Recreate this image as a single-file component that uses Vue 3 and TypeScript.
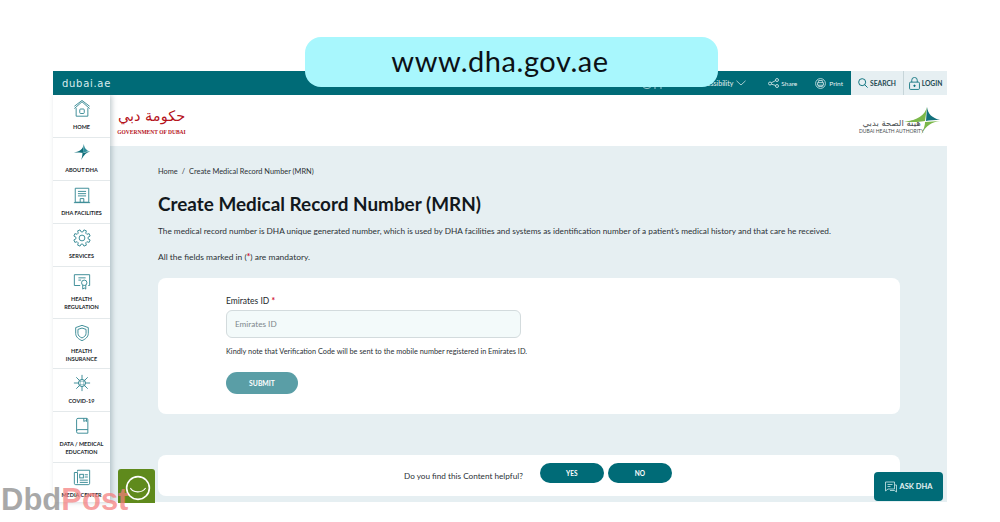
<script setup lang="ts">
const navItems = [
  { id: "home", lines: ["HOME"] },
  { id: "about", lines: ["ABOUT DHA"] },
  { id: "facilities", lines: ["DHA FACILITIES"] },
  { id: "services", lines: ["SERVICES"] },
  { id: "regulation", lines: ["HEALTH", "REGULATION"] },
  { id: "insurance", lines: ["HEALTH", "INSURANCE"] },
  { id: "covid", lines: ["COVID-19"] },
  { id: "education", lines: ["DATA / MEDICAL", "EDUCATION"] },
  { id: "media", lines: ["MEDIA CENTER"] },
];

// gear outline for the services icon, 8 teeth round the centre of a 20 box
const gearPath = (() => {
  const pts: string[] = [];
  const at = (r: number, deg: number) => {
    const a = (deg * Math.PI) / 180;
    return `${(10 + r * Math.cos(a)).toFixed(2)} ${(10 + r * Math.sin(a)).toFixed(2)}`;
  };
  for (let i = 0; i < 8; i++) {
    const c = i * 45 + 22.5;
    pts.push(at(6.8, c - 15), at(9.3, c - 9), at(9.3, c + 9), at(6.8, c + 15));
  }
  return "M" + pts.join("L") + "Z";
})();

const covidSpikes = [0, 45, 90, 135, 180, 225, 270, 315].map((deg) => {
  const a = (deg * Math.PI) / 180;
  return { x1: 10 + 4 * Math.cos(a), y1: 10 + 4 * Math.sin(a), x2: 10 + 9 * Math.cos(a), y2: 10 + 9 * Math.sin(a) };
});
</script>

<template>
  <div class="page">
    <div class="url-pill">www.dha.gov.ae</div>

    <div class="frame">
      <header class="topbar">
        <span class="brand">dubai.ae</span>
        <div class="top-links">
          <span class="top-link hidden-icons">
            <svg width="22" height="14" viewBox="0 0 22 14" fill="none" stroke="#cfe3e6" stroke-width="0.8">
              <circle cx="6" cy="7" r="5.500" />
              <path d="M14 13V3h6v10" />
            </svg>
          </span>
          <span class="top-link access">
            Accessibility
            <svg width="10" height="6" viewBox="0 0 10 6" fill="none" stroke="#cfe3e6" stroke-width="0.8">
              <path d="M.5 .8 5 5 9.500 .8" />
            </svg>
          </span>
          <span class="top-link share">
            <svg width="11" height="10" viewBox="0 0 11 10" fill="none" stroke="#e6f2f3" stroke-width="0.8">
              <circle cx="2" cy="5.500" r="1.500" />
              <circle cx="9" cy="2" r="1.500" />
              <circle cx="9" cy="8" r="1.500" />
              <path d="M3.400 4.800 7.600 2.600M3.400 6.200 7.600 7.400" />
            </svg>
            Share
          </span>
          <span class="top-link print">
            <svg width="11" height="11" viewBox="0 0 13 13" fill="none" stroke="#e6f2f3" stroke-width="0.9">
              <circle cx="6.500" cy="6.500" r="5.800" />
              <path d="M3 5.500h7v3H3zM4.300 5.500V3h4.400v2.500M4.300 8.500v1.600h4.400V8.500" />
            </svg>
            Print
          </span>
          <span class="tool-btn search">
            <svg width="10" height="10" viewBox="0 0 12 12" fill="none" stroke="#006b77" stroke-width="1.100">
              <circle cx="5" cy="5" r="4.200" />
              <path d="M8 8l3.500 3.500" />
            </svg>
            SEARCH
          </span>
          <span class="tool-btn login">
            <svg width="11" height="13" viewBox="0 0 12 14" fill="none" stroke="#006b77" stroke-width="0.900">
              <rect x="0.600" y="5.500" width="10.800" height="8" rx="1.200" />
              <path d="M3 5.500V3.400a3 3 0 0 1 6 0v2.100" />
              <circle cx="6" cy="9.500" r="0.800" fill="#006b77" />
            </svg>
            LOGIN
          </span>
        </div>
      </header>

      <div class="body">
        <nav class="sidebar">
          <a v-for="item in navItems" :key="item.id" class="nav-item" :class="'nav-' + item.id">
            <svg class="nav-icon" width="20" height="18" viewBox="0 0 20 20" fill="none" stroke="#2f8590" stroke-width="1">
              <template v-if="item.id === 'home'">
                <path d="M1.500 9.500 10 2l8.500 7.500M1.500 7 10 .500 18.500 7M3.500 9V18h13V9" />
                <rect x="7.500" y="10" width="5" height="5" rx="1" />
              </template>
              <template v-else-if="item.id === 'about'">
                <path d="M12 1C11 7 8 9 1 10.500c5 0 8 0 10 .5z" fill="#0f6e7a" stroke="none" />
                <path d="M12 1c.5 4 2.500 7 7 8.500-3 0-6 .5-8 1.500z" fill="#2f8f9b" stroke="none" />
                <path d="M19 9.500c-4 1-6.500 3.500-10 9.500 1-3 1.500-5.500 1.500-8z" fill="#0f6e7a" stroke="none" />
              </template>
              <template v-else-if="item.id === 'facilities'">
                <path d="M2.500 18V2.500h15V18zM1 18.500h18M8 18v-4h4v4M5.500 6h9M5.500 8.500h9M5.500 11h9" />
              </template>
              <template v-else-if="item.id === 'services'">
                <circle cx="10" cy="10" r="3.200" />
                <path :d="gearPath" />
              </template>
              <template v-else-if="item.id === 'regulation'">
                <path d="M8 15H1.500V3h17v12H17" />
                <path d="M6 6.500h8M6 9h3" />
                <circle cx="12.500" cy="12" r="3" />
                <path d="M10.800 14.500v4.500l1.700-1.200 1.700 1.200v-4.500" />
              </template>
              <template v-else-if="item.id === 'insurance'">
                <path d="M10 1.500 17 4v6.500c0 4-3.500 6.500-7 8-3.500-1.500-7-4-7-8V4z" />
                <path d="M10 4.500 14.500 6v4.500c0 2.500-2.200 4-4.500 5-2.300-1-4.500-2.500-4.500-5V6z" />
              </template>
              <template v-else-if="item.id === 'covid'">
                <circle cx="10" cy="10" r="4" />
                <path d="M7 8h6M7 12h6M8 7v6M12 7v6" stroke-width="0.600" />
                <line v-for="(s, i) in covidSpikes" :key="i" :x1="s.x1" :y1="s.y1" :x2="s.x2" :y2="s.y2" />
              </template>
              <template v-else-if="item.id === 'education'">
                <path d="M4 15.500V3a1.500 1.500 0 0 1 1.500-1.500H15a1.500 1.500 0 0 1 1.500 1.500v15H5.500A1.500 1.500 0 0 1 4 16.500v-1A1.500 1.500 0 0 1 5.500 14h11" />
                <path d="M12 1.500V5l1.500-1 1.500 1V1.500" />
              </template>
              <template v-else>
                <path d="M5 4V2.500h13.500V17a1.500 1.500 0 0 1-1.500 1.500H3A1.500 1.500 0 0 1 1.500 17V5H5v12" />
                <rect x="7.500" y="7" width="4" height="4" />
                <path d="M13 7.500h3.500M13 10h3.500M7.500 13.500h9M7.500 16h9" />
              </template>
            </svg>
            <span class="nav-label">
              <span v-for="line in item.lines" :key="line" class="nav-line">{{ line }}</span>
            </span>
          </a>
        </nav>

        <div class="content">
          <div class="logos">
            <div class="gov-logo">
              <span class="gov-ar" lang="ar" dir="rtl">حكومة دبي</span>
              <span class="gov-en">GOVERNMENT OF DUBAI</span>
            </div>
            <div class="dha-logo">
              <div class="dha-text">
                <span class="dha-ar" lang="ar" dir="rtl">هيئة الصحة بدبي</span>
                <span class="dha-en">DUBAI HEALTH AUTHORITY</span>
              </div>
              <svg class="dha-star" width="36" height="28" viewBox="0 0 36 28">
                <path d="M23 0C21 8 14 13 0 15c10 0 17 0 21-1z" fill="#7bb84a" />
                <path d="M23 0c1 7 5 11 13 13-6 0-11 0-14 1z" fill="#13707c" />
                <path d="M36 14c-8 1-14 4-19 14 3-6 4-10 4-13z" fill="#7bb84a" />
              </svg>
            </div>
          </div>

          <main class="main">
            <div class="breadcrumb"><span>Home</span><i>/</i><span>Create Medical Record Number (MRN)</span></div>
            <h1>Create Medical Record Number (MRN)</h1>
            <p class="lead">The medical record number is DHA unique generated number, which is used by DHA facilities and systems as identification number of a patient’s medical history and that care he received.</p>
            <p class="mandatory">All the fields marked in (<b>*</b>) are mandatory.</p>

            <form class="card form-card" @submit.prevent>
              <label class="field-label" for="eid">Emirates ID <b>*</b></label>
              <input id="eid" class="field" type="text" placeholder="Emirates ID" />
              <p class="note">Kindly note that Verification Code will be sent to the mobile number registered in Emirates ID.</p>
              <button class="submit" type="submit">SUBMIT</button>
            </form>

            <div class="card feedback">
              <span class="question">Do you find this Content helpful?</span>
              <button class="answer" type="button">YES</button>
              <button class="answer" type="button">NO</button>
            </div>
          </main>
        </div>
      </div>
    </div>

    <div class="chat-tab">
      <svg width="26" height="26" viewBox="0 0 24 24" fill="none" stroke="#fff" stroke-width="1.500">
        <circle cx="12" cy="12" r="10.500" />
        <path d="M5 12c2 4.500 11 5 14 0" stroke-width="1" />
      </svg>
    </div>

    <button class="ask" type="button">
      <svg width="12" height="12" viewBox="0 0 12 12" fill="none" stroke="#cfe8ea" stroke-width="0.800">
        <path d="M.5 1h9v7H3L.5 10z" />
        <path d="M2.500 3.500h5M2.500 5.500h3M10 4h1.500v7l-2-1.500H5" />
      </svg>
      ASK DHA
    </button>

    <div class="watermark"><span class="wm-grey">Dbd</span><span class="wm-red">Post</span></div>
  </div>
</template>

<style>
html,
body {
  margin: 0;
  background: #fff;
}
</style>

<style scoped>
.page {
  position: relative;
  width: 1000px;
  height: 522px;
  padding: 71px 53px 20px;
  box-sizing: border-box;
  overflow: hidden;
  background: #fff;
  font-family: Lato, "Liberation Sans", sans-serif;
  color: #2b3136;
}

.url-pill {
  position: absolute;
  top: 37px;
  left: 305px;
  width: 413px;
  height: 50px;
  box-sizing: border-box;
  padding: 0 23px 4px 0;
  display: flex;
  align-items: center;
  justify-content: center;
  border-radius: 16px;
  background: #a8f7fd;
  font-size: 29px;
  letter-spacing: 0.550px;
  color: #0c1116;
  z-index: 3;
}

.frame {
  height: 431px;
  display: flex;
  flex-direction: column;
}

.topbar {
  height: 24px;
  flex: none;
  display: flex;
  align-items: center;
  justify-content: space-between;
  padding-left: 9px;
  background: #006b77;
  color: #e6f2f3;
}

.brand {
  font-family: "DejaVu Sans", sans-serif;
  font-size: 10px;
  letter-spacing: 0.700px;
  color: #d9ecee;
}

.top-links {
  height: 100%;
  display: flex;
  align-items: center;
}

.top-link {
  display: flex;
  align-items: center;
  gap: 3px;
  font-size: 6.500px;
}

.hidden-icons {
  margin-right: 33px;
}

.access {
  margin-right: 22px;
  font-size: 7px;
}

.share {
  gap: 2px;
  margin-right: 18px;
}

.print {
  margin-right: 8px;
}

.tool-btn {
  height: 100%;
  box-sizing: border-box;
  display: flex;
  align-items: center;
  justify-content: center;
  gap: 2px;
  background: #e6eff2;
  color: #1e4a52;
  font-size: 6.700px;
  font-weight: 700;
}

.search {
  width: 52px;
}

.login {
  width: 44px;
  border-left: 1px solid #c7d5d9;
}

.body {
  flex: 1;
  display: flex;
  min-height: 0;
}

.sidebar {
  width: 57px;
  flex: none;
  background: #fff;
  box-shadow: 2px 0 5px rgba(60, 90, 100, 0.3);
  z-index: 1;
}

.nav-item {
  height: 43px;
  box-sizing: border-box;
  display: flex;
  flex-direction: column;
  align-items: center;
  padding-top: 5px;
  border-bottom: 1px solid #e4e9eb;
}

.nav-regulation {
  height: 52px;
}

.nav-insurance {
  height: 50px;
}

.nav-education {
  height: 51px;
}

.nav-media {
  height: 39px;
  border-bottom: 0;
}

.nav-icon {
  flex: none;
}

.nav-label {
  margin-top: 5px;
  display: flex;
  flex-direction: column;
  align-items: center;
  font-size: 5.500px;
  line-height: 8px;
  font-weight: 700;
  color: #23282c;
  white-space: nowrap;
}

.nav-line {
  display: block;
}

.content {
  flex: 1;
  min-width: 0;
  display: flex;
  flex-direction: column;
}

.logos {
  height: 51px;
  flex: none;
  display: flex;
  align-items: flex-start;
  justify-content: space-between;
  padding: 0 7px 0 8px;
  background: #fff;
}

.gov-logo {
  width: 67px;
  display: flex;
  flex-direction: column;
  align-items: center;
  color: #b5121b;
}

.gov-ar {
  margin-top: 9px;
  font-family: "DejaVu Sans", sans-serif;
  font-size: 14.500px;
  line-height: 24px;
  white-space: nowrap;
}

.gov-en {
  margin-top: 1px;
  font-family: "Liberation Serif", serif;
  font-size: 5.500px;
  line-height: 7px;
  font-weight: 700;
  white-space: nowrap;
}

.dha-logo {
  position: relative;
  width: 81px;
  height: 100%;
}

.dha-text {
  position: absolute;
  left: 0;
  top: 23px;
  display: flex;
  flex-direction: column;
  align-items: center;
  color: #4a4f52;
}

.dha-ar {
  font-family: "DejaVu Sans", sans-serif;
  font-size: 8.500px;
  line-height: 10px;
  white-space: nowrap;
}

.dha-en {
  font-size: 5px;
  line-height: 6px;
  white-space: nowrap;
}

.dha-star {
  position: absolute;
  top: 12px;
  right: 0;
}

.main {
  flex: 1;
  min-height: 0;
  padding: 21px 47px 0 48px;
  background: #e6eff2;
}

.breadcrumb {
  display: flex;
  gap: 4px;
  font-size: 7.400px;
  line-height: 10px;
  color: #2b3136;
}

.breadcrumb i {
  font-style: normal;
}

h1 {
  margin: 15px 0 0;
  font-size: 18.900px;
  line-height: 24px;
  font-weight: 700;
  color: #12181d;
}

.lead {
  margin: 9px 0 0;
  font-size: 8.250px;
  line-height: 12px;
  white-space: nowrap;
}

.mandatory {
  margin: 14px 0 0;
  font-size: 8.450px;
  line-height: 12px;
}

.mandatory b,
.field-label b {
  color: #d0102e;
}

.card {
  background: #fff;
  border-radius: 8px;
}

.form-card {
  height: 136px;
  box-sizing: border-box;
  margin-top: 15px;
  padding: 18px 0 0 68px;
}

.field-label {
  display: block;
  font-size: 8.500px;
  line-height: 11px;
  color: #23282c;
}

.field {
  display: block;
  width: 295px;
  height: 28px;
  box-sizing: border-box;
  margin-top: 3px;
  padding: 0 8px;
  border: 1px solid #d3dbdd;
  border-radius: 6px;
  background: #f3fafa;
  font-family: inherit;
  font-size: 8.200px;
}

.field::placeholder {
  color: #7d878c;
  opacity: 1;
}

.note {
  margin: 9px 0 0;
  font-size: 7.350px;
  line-height: 10px;
  white-space: nowrap;
}

.submit {
  display: block;
  width: 72px;
  height: 22px;
  margin-top: 15px;
  padding: 0;
  border: 0;
  border-radius: 11px;
  background: #5a9ea6;
  color: #fff;
  font-family: inherit;
  font-size: 6.800px;
  font-weight: 700;
}

.feedback {
  height: 41px;
  margin-top: 41px;
  display: flex;
  align-items: center;
  padding-left: 246px;
}

.question {
  margin-right: 17px;
  font-size: 8.200px;
}

.answer {
  align-self: flex-start;
  width: 64px;
  height: 20px;
  margin: 8px 4px 0 0;
  padding: 0;
  border: 0;
  border-radius: 10px;
  background: #006b77;
  color: #fff;
  font-family: inherit;
  font-size: 6.500px;
  font-weight: 700;
}

.chat-tab {
  position: absolute;
  left: 118px;
  top: 469px;
  width: 37px;
  height: 34px;
  box-sizing: border-box;
  padding: 3px 0 0 2px;
  display: flex;
  align-items: center;
  justify-content: center;
  border-radius: 3px 3px 0 0;
  background: #5f8a1c;
  z-index: 2;
}

.ask {
  position: absolute;
  left: 874px;
  top: 472px;
  width: 69px;
  height: 29px;
  display: flex;
  align-items: center;
  justify-content: center;
  gap: 3px;
  padding: 0;
  border: 0;
  border-radius: 4px;
  background: #006b77;
  color: #e6f2f3;
  font-family: inherit;
  font-size: 7.500px;
  font-weight: 700;
  z-index: 2;
}

.watermark {
  position: absolute;
  left: 1px;
  top: 483px;
  font-family: "Liberation Sans", Arial, sans-serif;
  font-size: 31px;
  line-height: 34px;
  font-weight: 700;
  z-index: 4;
}

.wm-grey {
  color: rgba(140, 140, 140, 0.75);
}

.wm-red {
  color: rgba(245, 125, 125, 0.72);
}
</style>
